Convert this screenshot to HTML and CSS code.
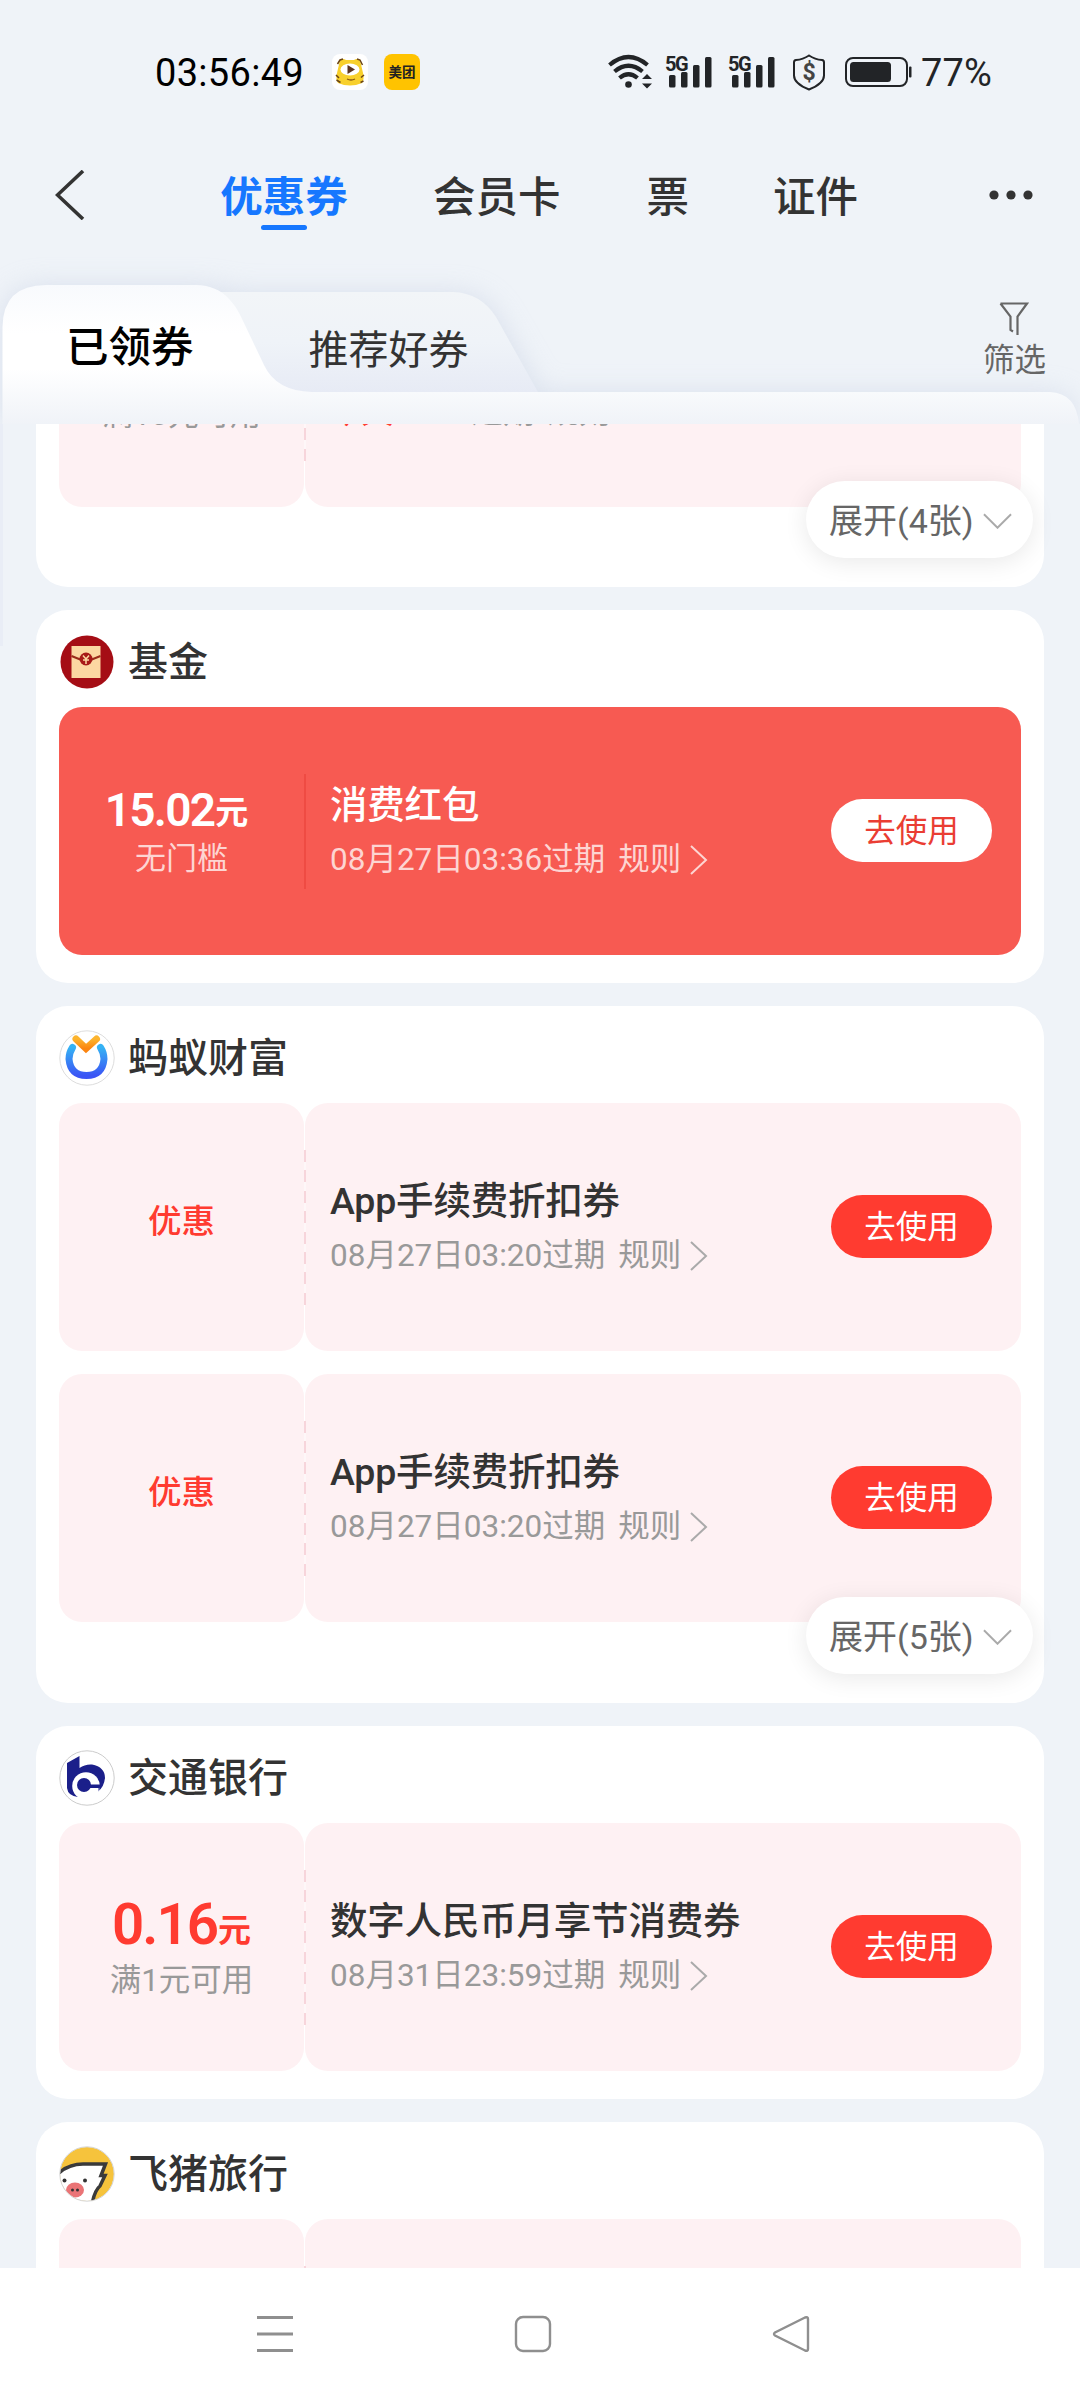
FILE: index.html
```html
<!DOCTYPE html>
<html lang="zh-CN">
<head>
<meta charset="utf-8">
<title>优惠券</title>
<link rel="stylesheet" href="styles.css">
</head>
<body>
<div class="screen">
  <header class="status">
    <span class="clock">03:56:49</span>
    <svg class="app-icon app-tiger" viewBox="0 0 36 36"><rect width="36" height="36" rx="8" fill="#fff"/><path d="M8 6q3-2 6 0h8q3-2 6 0l3 13q1.500 6-1 10-12 5-24 0-2.500-4-1-10z" fill="#f8d02c"/><path d="M5.500 10l2.500-4 3-1M25 5l3 1 2.500 5M4 21l3 3M4.500 26l4 2.500M32 21l-3 2.500M31.500 27l-3 1.500" stroke="#6b4515" stroke-width="1.500" fill="none"/><ellipse cx="18" cy="15.500" rx="9.500" ry="6" fill="#fff"/><path d="M15.500 11l7.500 4.500-7.500 4.500z" fill="#5b3420"/><path d="M15 25q4 2 8 0" stroke="#8a5a10" stroke-width="1.300" fill="none"/></svg>
    <span class="app-icon app-meituan">美团</span>
    <div class="status-right">
      <svg class="wifi" viewBox="0 0 44 36"><g fill="none" stroke="#222427" stroke-width="4.200"><path d="M1.500 11q19-16 38 0"/><path d="M6.500 17.500q14-11.500 28 0"/><path d="M11.500 24q9-7.500 18 0"/></g><circle cx="20.500" cy="30.500" r="3.300" fill="#222427"/><path d="M34 25l5-5 5 5zM34 29.500l5 5 5-5z" fill="#222427"/></svg>
      <div class="signal"><span>5G</span><svg viewBox="0 0 48 34"><g fill="#222427"><rect x="4" y="20" width="6.500" height="12.500" rx="1.500"/><rect x="16" y="17" width="6.500" height="15.500" rx="1.500"/><rect x="28" y="10" width="6.500" height="22.500" rx="1.500"/><rect x="40" y="2" width="6.500" height="30.500" rx="1.500"/></g></svg></div>
      <div class="signal signal-2"><span>5G</span><svg viewBox="0 0 48 34"><g fill="#222427"><rect x="4" y="20" width="6.500" height="12.500" rx="1.500"/><rect x="16" y="17" width="6.500" height="15.500" rx="1.500"/><rect x="28" y="10" width="6.500" height="22.500" rx="1.500"/><rect x="40" y="2" width="6.500" height="30.500" rx="1.500"/></g></svg></div>
      <div class="shield"><svg viewBox="0 0 34 37"><path d="M17 1.500q6 4 13 4.500 2 .2 2 2.500v13q0 8-15 14Q2 29.500 2 21.500v-13Q2 6.200 4 6q7-.5 13-4.500z" fill="none" stroke="#222427" stroke-width="2"/></svg><span>$</span></div>
      <svg class="battery" viewBox="0 0 68 30"><rect x="1" y="1" width="61" height="28" rx="7" fill="none" stroke="#222427" stroke-width="2"/><rect x="5" y="5" width="41" height="20" rx="3.500" fill="#222427"/><rect x="64" y="9.500" width="2.500" height="11" rx="1" fill="#222427"/></svg>
      <span class="percent">77%</span>
    </div>
  </header>

  <nav class="topnav">
    <svg class="back" viewBox="0 0 30 50"><path d="M28 1L2.500 25 28 49" fill="none" stroke="#333" stroke-width="3.600"/></svg>
    <a class="on">优惠券</a><a class="t2">会员卡</a><a class="t3">票</a><a class="t4">证件</a>
    <svg class="more" viewBox="0 0 44 10"><g fill="#333"><circle cx="5" cy="5" r="4.600"/><circle cx="22" cy="5" r="4.600"/><circle cx="39" cy="5" r="4.600"/></g></svg>
  </nav>

  <div class="tabs">
    <svg class="tabs-bg" viewBox="0 0 1080 174">
      <defs>
        <linearGradient id="ga" x1="0" y1="35" x2="0" y2="174" gradientUnits="userSpaceOnUse"><stop offset="0" stop-color="#f8fafd"/><stop offset=".35" stop-color="#fff"/><stop offset=".6" stop-color="#fff"/><stop offset="1" stop-color="#f0f3f8"/></linearGradient>
        <linearGradient id="gp" x1="0" y1="142" x2="0" y2="174" gradientUnits="userSpaceOnUse"><stop offset="0" stop-color="#f8fafc"/><stop offset="1" stop-color="#f0f3f8"/></linearGradient>
        <linearGradient id="gb" x1="0" y1="42" x2="0" y2="142" gradientUnits="userSpaceOnUse"><stop offset="0" stop-color="#f2f5f8"/><stop offset=".5" stop-color="#eff3f8"/><stop offset="1" stop-color="#e7ebf5"/></linearGradient>
        <filter id="sh" x="-10%" y="-50%" width="120%" height="200%"><feGaussianBlur stdDeviation="13"/></filter>
        <clipPath id="top"><rect x="0" y="-80" width="1080" height="254"/></clipPath>
      </defs>
      <g clip-path="url(#top)"><path d="M2 174V72Q2 35 44 35H198Q224 36 240 42H455Q485 42 500 70L541 142H1050Q1078 144 1078 174Z" fill="#c9d2e4" opacity=".55" filter="url(#sh)"/></g>
      <path d="M200 42H453Q481 43 496 67L538 142H200Z" fill="url(#gb)"/>
      <path d="M290 142H1050Q1076 143 1079 174H250Z" fill="url(#gp)"/>
      <path d="M2.500 174V77Q3 35 46 35H196C225 35 237 57 244 73L264 115Q276 141 312 142V174Z" fill="url(#ga)"/>
    </svg>
    <a class="tab-on">已领券</a>
    <a class="tab-off">推荐好券</a>
    <div class="filter"><svg viewBox="0 0 30 34"><path d="M1.500 1.500H28L18.500 14.500V33M1.500 1.500L11.500 14.500V28L14 29.500" fill="none" stroke="#666" stroke-width="2.200"/></svg><span>筛选</span></div>
  </div>

  <main class="list">
    <section class="card card-cut expandable">
      <div class="coupon">
        <div class="left"><p class="cond">满10元可用</p></div><span class="dash"></span>
        <div class="right"><p class="meta"><em>今天23:59</em>过期<b>规则</b></p></div>
      </div>
      <a class="expand">展开(4张)<svg viewBox="0 0 30 16"><path d="M1 1l14 14L29 1"/></svg></a>
    </section>

    <section class="card">
      <h2><svg class="logo" viewBox="0 0 56 56"><circle cx="28" cy="28" r="26.500" fill="#a50d15"/><path d="M12.500 12h29v32h-29z" fill="#fcd7a2"/><path d="M12.500 22l10 4M41.500 22l-10 4" stroke="#9a2c1a" stroke-width="2"/><circle cx="27" cy="25" r="6.500" fill="#a81a18"/><path d="M24 21.500l3 3.500 3-3.500M27 25v5M24 26h6" stroke="#fcd7a2" stroke-width="1.500" fill="none"/></svg>基金</h2>
      <div class="coupon solid">
        <div class="left small"><p class="amt">15.02<i>元</i></p><p class="cond">无门槛</p></div><span class="dash"></span>
        <div class="right"><div><h3>消费红包</h3><p class="meta">08月27日03:36过期<b>规则</b><svg viewBox="0 0 18 30"><path d="M1 1l15 14L1 29"/></svg></p></div><a class="use">去使用</a></div>
      </div>
    </section>

    <section class="card expandable">
      <h2><svg class="logo" viewBox="0 0 56 56"><defs><linearGradient id="u" x1="0" y1="0" x2="0" y2="1"><stop offset="0" stop-color="#35b2f4"/><stop offset="1" stop-color="#3b55f5"/></linearGradient><linearGradient id="v" x1="0" y1="0" x2="0" y2="1"><stop offset="0" stop-color="#fcb42e"/><stop offset="1" stop-color="#fb8510"/></linearGradient></defs><circle cx="28" cy="28" r="27.200" fill="#fff" stroke="#ddd"/><path d="M13.500 17.500Q10 23 10 29Q11.500 45.500 27.500 45.500Q43.500 45.500 45 29Q45 23 41.500 17.500" fill="none" stroke="url(#u)" stroke-width="7" stroke-linecap="round"/><path d="M17 9L27 18.500 37.500 9" fill="none" stroke="url(#v)" stroke-width="7" stroke-linecap="round"/></svg>蚂蚁财富</h2>
      <div class="coupon">
        <div class="left word"><p>优惠</p></div><span class="dash"></span>
        <div class="right"><div><h3>App手续费折扣券</h3><p class="meta">08月27日03:20过期<b>规则</b><svg viewBox="0 0 18 30"><path d="M1 1l15 14L1 29"/></svg></p></div><a class="use">去使用</a></div>
      </div>
      <div class="coupon">
        <div class="left word"><p>优惠</p></div><span class="dash"></span>
        <div class="right"><div><h3>App手续费折扣券</h3><p class="meta">08月27日03:20过期<b>规则</b><svg viewBox="0 0 18 30"><path d="M1 1l15 14L1 29"/></svg></p></div><a class="use">去使用</a></div>
      </div>
      <a class="expand">展开(5张)<svg viewBox="0 0 30 16"><path d="M1 1l14 14L29 1"/></svg></a>
    </section>

    <section class="card">
      <h2><svg class="logo" viewBox="0 0 56 56"><circle cx="28" cy="28" r="27.200" fill="#fff" stroke="#ccc" stroke-width="1"/><path d="M8 13L20.500 6V18Q26 14 33 14.500Q46 17 46 28Q45 37 39 41.500L19 47Q9 46 8 38Z" fill="#1b1f8a"/><circle cx="27" cy="36" r="13.800" fill="#fff"/><circle cx="25" cy="35" r="7" fill="#1b1f8a"/><path d="M25 34.500H42L39.500 41.500V38H25Z" fill="#1b1f8a"/></svg>交通银行</h2>
      <div class="coupon">
        <div class="left big"><p class="amt">0.16<i>元</i></p><p class="cond">满1元可用</p></div><span class="dash"></span>
        <div class="right"><div><h3>数字人民币月享节消费券</h3><p class="meta">08月31日23:59过期<b>规则</b><svg viewBox="0 0 18 30"><path d="M1 1l15 14L1 29"/></svg></p></div><a class="use">去使用</a></div>
      </div>
    </section>

    <section class="card">
      <h2><svg class="logo" viewBox="0 0 56 56"><defs><clipPath id="c"><circle cx="28" cy="28" r="27"/></clipPath></defs><g clip-path="url(#c)"><rect width="56" height="56" fill="#f6c33c"/><path d="M-2 26Q10 18 24 18H46L42 30H46L42 40Q36 44 34 58H-2Z" fill="#fff"/><path d="M0 27Q10 18 24 18H46.500L42 29.500H46L41 40Q36 44 33.500 56" fill="none" stroke="#3a3a3a" stroke-width="3.500"/><ellipse cx="16" cy="44" rx="9" ry="7.500" fill="#ea7476"/></g><circle cx="28" cy="28" r="27.200" fill="none" stroke="#d5d5d5"/><g fill="#333"><circle cx="5.500" cy="34.500" r="2"/><circle cx="26" cy="34.500" r="2"/><circle cx="13.500" cy="44" r="1.500"/><circle cx="18.500" cy="44" r="1.500"/></g></svg>飞猪旅行</h2>
      <div class="coupon"><div class="left"></div><span class="dash"></span><div class="right"></div></div>
    </section>
  </main>

  <footer class="sysnav">
    <svg viewBox="0 0 38 38"><path d="M1 2.500h36M1 19h36M1 35.500h36" stroke="#8f8f8f" stroke-width="3"/></svg>
    <svg viewBox="0 0 38 38"><rect x="2" y="2" width="34" height="34" rx="7" fill="none" stroke="#8f8f8f" stroke-width="2.400"/></svg>
    <svg viewBox="0 0 38 38"><path d="M33 2.500L3 17.500Q1 19 3 20.500L33 35.500Q36 36.500 36 34V4Q36 1.500 33 2.500Z" fill="none" stroke="#8f8f8f" stroke-width="2.400"/></svg>
  </footer>
</div>
</body>
</html>
```
FILE: styles.css
```css
* { box-sizing: border-box; }
body, h2, h3, p { margin: 0; }
body { font-family: Roboto, "Noto Sans CJK SC", sans-serif; color: #333; }
i, em { font-style: normal; }
svg { display: block; flex: none; }

.screen { width: 1080px; height: 2400px; background: #eff3f8; overflow: hidden; display: flex; flex-direction: column; }

.status { height: 144px; flex: none; display: flex; align-items: center; padding-left: 155px; }
.clock { width: 177px; padding-top: 1px; font-size: 38px; line-height: 44px; color: #000; letter-spacing: .3px; white-space: nowrap; }
.app-icon { width: 36px; height: 36px; }
.app-meituan { margin-left: 16px; border-radius: 8px; background: #ffc300; color: #222; font-size: 13.500px; line-height: 36px; font-weight: 700; text-align: center; }
.status-right { margin-left: 188px; display: flex; align-items: center; color: #222427; }
.wifi { width: 44px; height: 36px; margin-right: 13px; }
.signal { width: 48px; height: 34px; position: relative; }
.signal-2 { margin-left: 15px; }
.signal span { position: absolute; left: 0; top: -1px; font-size: 20px; line-height: 20px; font-weight: 700; letter-spacing: -1.500px; }
.signal svg { width: 48px; height: 34px; }
.shield { width: 34px; height: 37px; margin: 0 19px 0 16px; position: relative; }
.shield svg { width: 34px; height: 37px; }
.shield span { position: absolute; inset: 0; text-align: center; font-size: 23px; line-height: 37px; font-weight: 700; color: #444; }
.battery { width: 68px; height: 30px; margin-right: 8px; }
.percent { padding-top: 1px; font-size: 38px; line-height: 44px; letter-spacing: .2px; }

.topnav { height: 106px; flex: none; display: flex; align-items: flex-start; padding-left: 55px; font-size: 42.500px; line-height: 60px; font-weight: 500; }
.topnav a { margin-top: 24px; white-space: nowrap; }
.back { width: 30px; height: 50px; margin: 26px 135px 0 0; }
.topnav .on { color: #1677ff; font-weight: 700; width: 128px; display: flex; flex-direction: column; align-items: center; }
.topnav .on::after { content: ""; width: 46px; height: 5px; margin-top: -3px; border-radius: 3px; background: #1677ff; }
.t2 { margin-left: 85px; }
.t3 { margin-left: 86px; }
.t4 { margin-left: 84px; }
.more { width: 44px; height: 10px; margin: 46px 0 0 131px; }

.tabs { height: 174px; flex: none; position: relative; display: flex; }
.tabs-bg { position: absolute; inset: 0; width: 1080px; height: 174px; overflow: visible; }
.tabs a, .filter { position: relative; white-space: nowrap; }
.tab-on { margin: 68px 0 0 66px; font-size: 42.500px; line-height: 60px; font-weight: 500; color: #000; }
.tab-off { margin: 71px 0 0 115px; font-size: 40px; line-height: 60px; }
.filter { margin: 52px 34px 0 auto; display: flex; flex-direction: column; align-items: center; color: #666; font-size: 31.500px; line-height: 36px; }
.filter svg { width: 30px; height: 34px; margin-bottom: 7px; }

.list { height: 1844px; flex: none; overflow: hidden; position: relative; padding: 0 36px; display: flex; flex-direction: column; gap: 23px; }
.list::before { content: ""; position: absolute; left: 0; top: 0; width: 3px; height: 222px; background: #e9edf6; }
.card { flex: none; background: #fff; border-radius: 32px; padding: 0 23px 28px; position: relative; display: flex; flex-direction: column; }
.expandable { padding-bottom: 81px; }
.card-cut { margin-top: -165px; padding-bottom: 80px; border-top-left-radius: 0; border-top-right-radius: 0; }
.card h2 { height: 97px; padding-top: 24px; display: flex; align-items: flex-start; gap: 13px; font-size: 40px; line-height: 58px; font-weight: 500; }
.logo { width: 56px; height: 56px; }

.coupon { height: 248px; flex: none; display: flex; align-items: center; }
.coupon + .coupon { margin-top: 23px; }
.left, .right { height: 100%; border-radius: 23px; background: #fef1f3; }
.left { width: 245px; text-align: center; color: #ff3b30; }
.dash { width: 2px; height: 155px; margin: 0 -.5px; position: relative; background: repeating-linear-gradient(#f7d5db 0 12px, #fef7f8 12px 20.400px); }
.right { flex: 1; padding: 70px 29px 0 25px; display: flex; justify-content: space-between; align-items: flex-start; }
.right h3 { font-size: 37.500px; line-height: 56px; font-weight: 500; letter-spacing: -.2px; white-space: nowrap; }
.meta { display: flex; align-items: center; font-size: 31.500px; line-height: 44px; margin-top: 5px; color: #999; white-space: nowrap; }
.meta em { color: #ff3b30; }
.meta b { font-weight: 400; margin-left: 13px; }
.meta svg { width: 18px; height: 30px; margin-left: 9px; fill: none; stroke: #aaa; stroke-width: 2; }
.use { width: 161px; height: 63px; margin-top: 22px; flex: none; border-radius: 32px; background: #ff3b30; color: #fff; text-align: center; font-size: 31.500px; line-height: 66px; }

.amt { font-weight: 600; white-space: nowrap; }
.amt i { font-size: 33px; font-weight: 600; letter-spacing: 0; margin-left: 1px; position: relative; top: -2px; }
.big .amt { padding-top: 69px; font-size: 56.500px; line-height: 66px; letter-spacing: -2px; }
.small .amt { padding: 73px 10px 0 0; font-size: 46px; line-height: 60px; letter-spacing: -1.700px; }
.cond { font-size: 31px; line-height: 44px; color: #999; }
.small .cond { margin-top: -8px; }
.big .cond { margin-top: -7px; font-size: 31.500px; }
.word { font-size: 33.500px; line-height: 50px; font-weight: 500; padding-top: 94px; }
.card-cut .cond { padding-top: 134px; }
.card-cut .meta { margin-top: 62px; }

.solid { background: #f75a52; border-radius: 23px; color: #fff; }
.solid .left, .solid .right { background: none; color: #fff; }
.solid .dash { height: 115px; background: #ef4b43; }
.solid .cond, .solid .meta { color: #fdd5d2; }
.solid .meta svg { stroke: #fdd5d2; }
.solid .use { background: #fff; color: #ea3d33; }

.expand { position: absolute; right: 11px; bottom: 29px; width: 227px; height: 77px; border-radius: 39px; background: #fff; box-shadow: 0 4px 24px rgba(0, 0, 0, .09); padding: 2px 0 0 23px; display: flex; align-items: center; font-size: 34px; line-height: 50px; color: #666; white-space: nowrap; }
.expand svg { width: 29px; height: 16px; margin-left: 9px; fill: none; stroke: #aaa; stroke-width: 2; }

.sysnav { flex: 1; background: #fff; display: flex; justify-content: space-between; padding: 47px 270px 0 256px; }
.sysnav svg { width: 38px; height: 38px; }
```
